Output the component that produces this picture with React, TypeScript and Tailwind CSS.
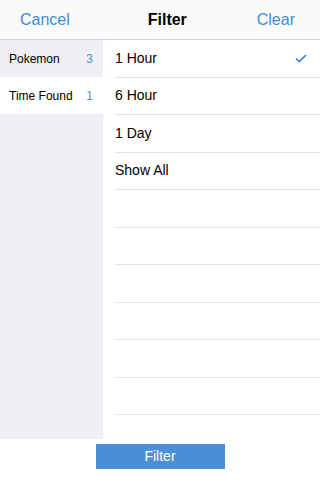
const categories = [
  { name: "Pokemon", count: 3, active: false },
  { name: "Time Found", count: 1, active: true },
];

const options = ["1 Hour", "6 Hour", "1 Day", "Show All", "", "", "", "", "", ""];

export default function App() {
  return (
    <div className="flex h-[480px] w-[320px] flex-col bg-white font-['Helvetica_Neue','Liberation_Sans',Arial,sans-serif] text-black">
      <div className="flex h-[40px] items-center justify-between border-b border-[#d6d6da] bg-[#fafafa] pl-5 pr-[25px]">
        <span className="text-[16px] text-[#3a8ed6]">Cancel</span>
        <span className="ml-2 text-[16px] font-bold">Filter</span>
        <span className="text-[16px] text-[#3a8ed6]">Clear</span>
      </div>
      <div className="flex h-[399px]">
        <div className="flex w-[103px] flex-col bg-[#efeff4]">
          {categories.map((c) => (
            <div
              key={c.name}
              className={
                "flex h-[37px] items-center justify-between pl-[9px] pr-[10px] text-[12px] " +
                (c.active ? "bg-white" : "bg-[#efeff4]")
              }
            >
              <span>{c.name}</span>
              <span className="text-[#4a90d9]">{c.count}</span>
            </div>
          ))}
        </div>
        <div className="flex flex-1 flex-col pl-[12px]">
          {options.map((o, i) => (
            <div
              key={i}
              className="flex h-[37.5px] shrink-0 items-center justify-between border-b border-[#e3e3e6] pr-[13px] text-[14px]"
            >
              <span>{o}</span>
              {i === 0 && (
                <svg width="12" height="9" viewBox="0 0 12 9" fill="none">
                  <path d="M1 4.5 L4.2 7.6 L11 1" stroke="#2f80e0" strokeWidth="1.6" />
                </svg>
              )}
            </div>
          ))}
        </div>
      </div>
      <div className="flex justify-center pt-[5px]">
        <button className="h-[25px] w-[129px] bg-[#4a90d9] text-[14px] text-white">Filter</button>
      </div>
    </div>
  );
}
